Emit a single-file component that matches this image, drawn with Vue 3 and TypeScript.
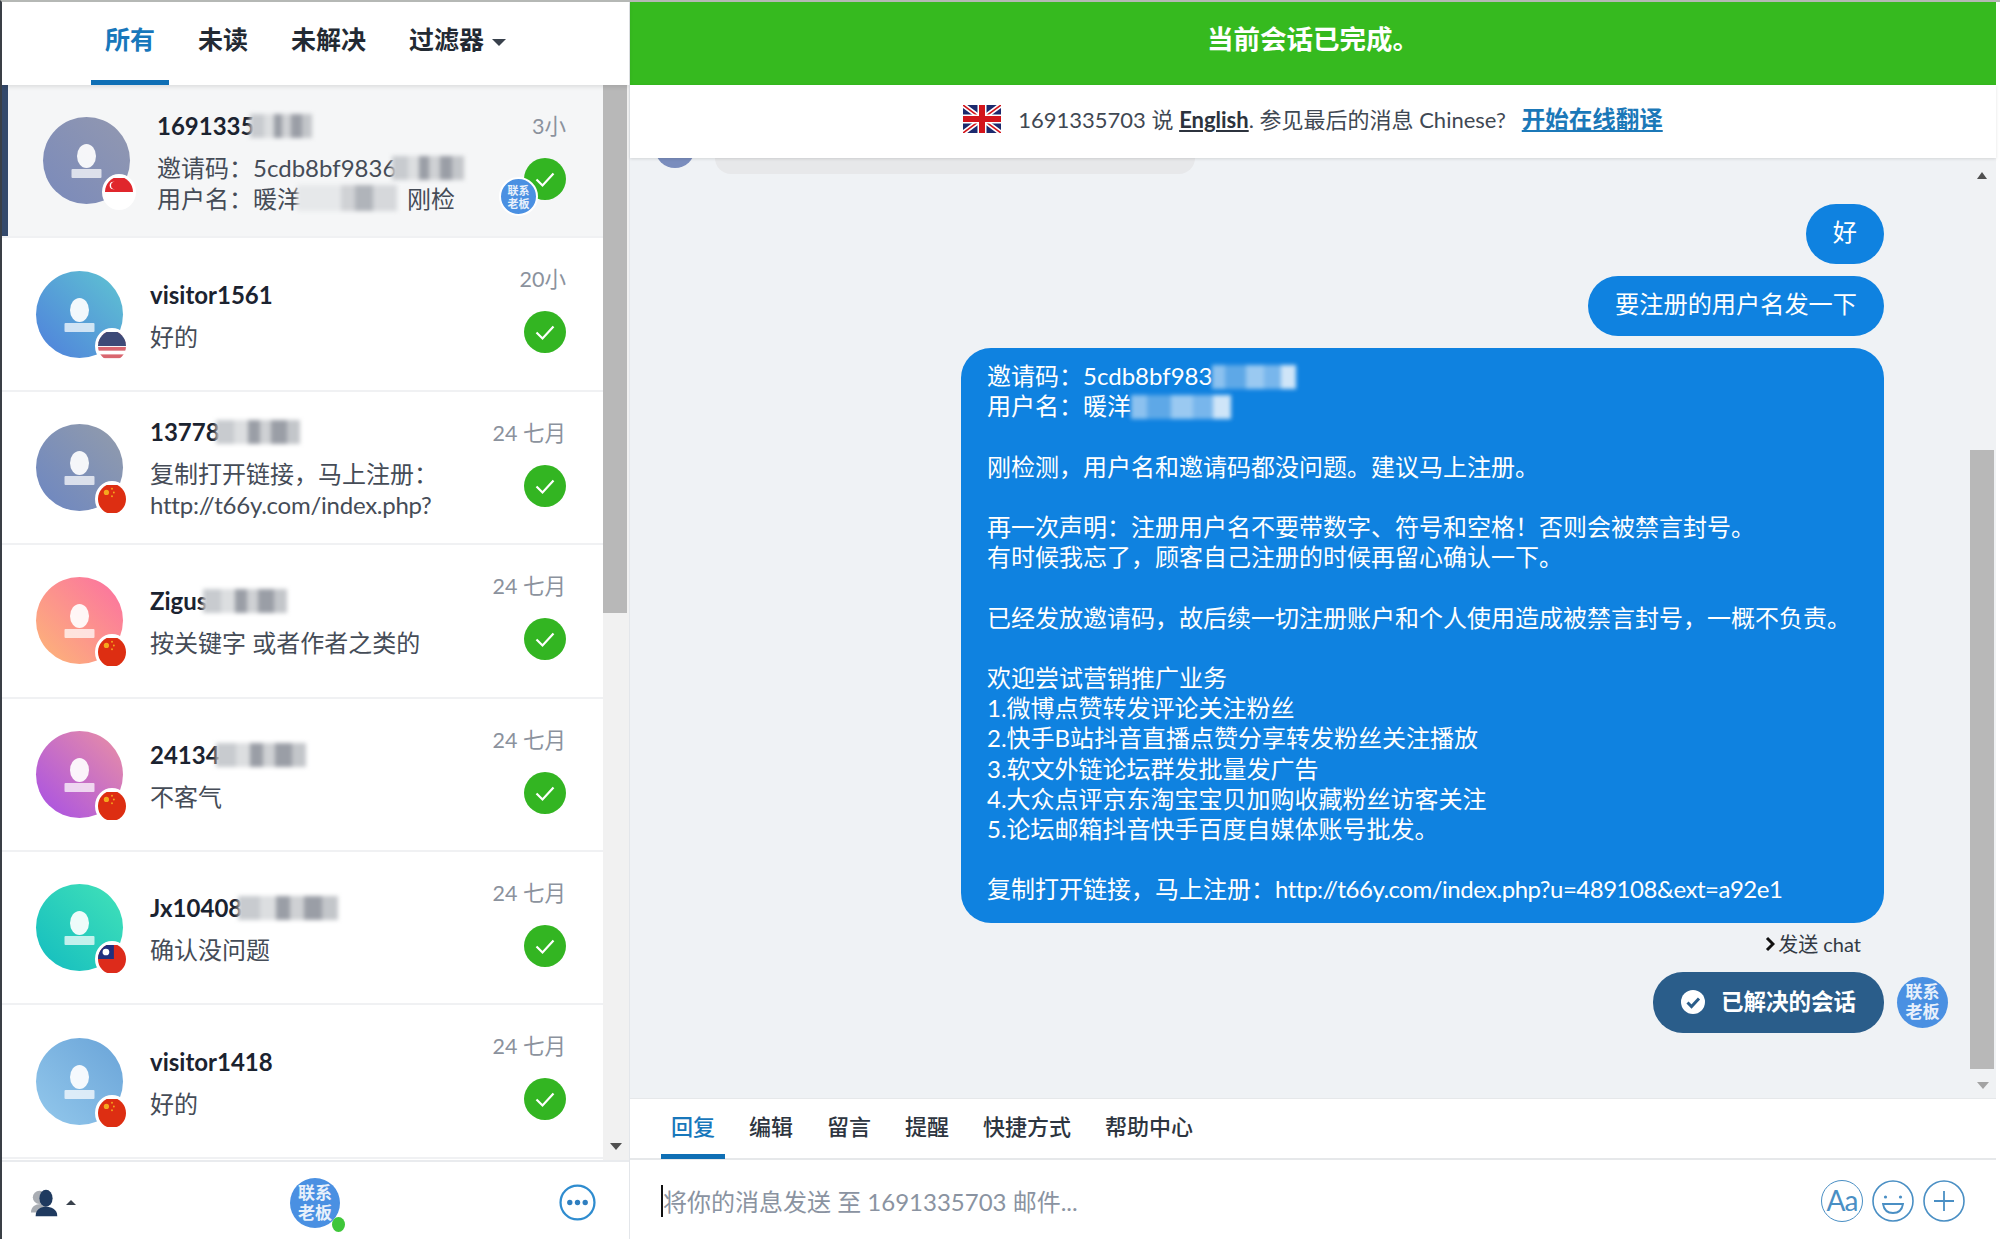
<script setup lang="ts">
interface Conv {
  name: string
  blur: number
  time: string
  lines: string[]
  grad: string
  flag: 'sg' | 'us' | 'cn' | 'tw'
}
const convs: Conv[] = [
  { name: '1691335', blur: 62, time: '3小', lines: [], grad: 'g1', flag: 'sg' },
  { name: 'visitor1561', blur: 0, time: '20小', lines: ['好的'], grad: 'g2', flag: 'us' },
  { name: '13778', blur: 84, time: '24 七月', lines: ['复制打开链接，马上注册：', 'http://t66y.com/index.php?'], grad: 'g3', flag: 'cn' },
  { name: 'Zigus', blur: 84, time: '24 七月', lines: ['按关键字 或者作者之类的'], grad: 'g4', flag: 'cn' },
  { name: '24134', blur: 90, time: '24 七月', lines: ['不客气'], grad: 'g5', flag: 'cn' },
  { name: 'Jx10408', blur: 100, time: '24 七月', lines: ['确认没问题'], grad: 'g6', flag: 'tw' },
  { name: 'visitor1418', blur: 0, time: '24 七月', lines: ['好的'], grad: 'g7', flag: 'cn' },
]
const tabs = ['未读', '未解决']
const replyTabs = ['编辑', '留言', '提醒', '快捷方式', '帮助中心']
const after = [
  '',
  '刚检测，用户名和邀请码都没问题。建议马上注册。',
  '',
  '再一次声明：注册用户名不要带数字、符号和空格！否则会被禁言封号。',
  '有时候我忘了，顾客自己注册的时候再留心确认一下。',
  '',
  '已经发放邀请码，故后续一切注册账户和个人使用造成被禁言封号，一概不负责。',
  '',
  '欢迎尝试营销推广业务',
  '1.微博点赞转发评论关注粉丝',
  '2.快手B站抖音直播点赞分享转发粉丝关注播放',
  '3.软文外链论坛群发批量发广告',
  '4.大众点评京东淘宝宝贝加购收藏粉丝访客关注',
  '5.论坛邮箱抖音快手百度自媒体账号批发。',
  '',
]
</script>

<template>
  <div class="app">
    <aside class="side">
      <nav class="side-tabs">
        <span class="stab active">所有</span>
        <span v-for="t in tabs" :key="t" class="stab">{{ t }}</span>
        <span class="stab">过滤器<i class="caret"></i></span>
      </nav>
      <div class="side-scroll">
        <ul class="list">
          <li v-for="(c, i) in convs" :key="c.name" class="row" :class="{ current: i === 0 }">
            <div class="avatar" :class="c.grad">
              <svg viewBox="0 0 87 87" class="person">
                <ellipse cx="43.5" cy="39" rx="9.5" ry="12" fill="#fff" fill-opacity=".92" />
                <rect x="28.5" y="52" width="30" height="9" rx="1" fill="#fff" fill-opacity=".72" />
              </svg>
              <span class="flag">
                <svg v-if="c.flag === 'sg'" viewBox="0 0 30 30">
                  <rect width="30" height="30" fill="#fff" />
                  <rect width="30" height="15" fill="#e0262c" />
                  <circle cx="9" cy="8" r="4" fill="#fff" />
                  <circle cx="10.5" cy="8" r="4" fill="#e0262c" />
                </svg>
                <svg v-else-if="c.flag === 'us'" viewBox="0 0 30 30">
                  <rect width="30" height="30" fill="#fff" />
                  <rect y="0" width="30" height="4" fill="#d9666f" />
                  <rect y="8" width="30" height="4" fill="#d9666f" />
                  <rect y="16" width="30" height="4" fill="#d9666f" />
                  <rect y="24" width="30" height="4" fill="#d9666f" />
                  <rect width="30" height="15" fill="#3e4a77" />
                </svg>
                <svg v-else-if="c.flag === 'tw'" viewBox="0 0 30 30">
                  <rect width="30" height="30" fill="#dd2b1b" />
                  <rect width="17" height="15" fill="#20307e" />
                  <circle cx="8.5" cy="7.5" r="3.6" fill="#fff" />
                </svg>
                <svg v-else viewBox="0 0 30 30">
                  <rect width="30" height="30" fill="#dd2e12" />
                  <circle cx="9" cy="8" r="2.8" fill="#f5a71e" />
                  <circle cx="15" cy="4" r="1" fill="#f5a71e" />
                  <circle cx="17" cy="8" r="1" fill="#f5a71e" />
                  <circle cx="15" cy="12" r="1" fill="#f5a71e" />
                </svg>
              </span>
            </div>
            <div class="body">
              <div class="name">{{ c.name }}<span v-if="c.blur" class="mosaic" :style="{ width: c.blur + 'px' }"></span></div>
              <template v-if="i === 0">
                <div class="msg">邀请码：5cdb8bf9836<span class="mosaic short"></span></div>
                <div class="msg">用户名：暖洋<span class="mosaic long"></span>刚检</div>
              </template>
              <template v-else>
                <div v-for="l in c.lines" :key="l" class="msg" :class="{ url: l.startsWith('http') }">{{ l }}</div>
              </template>
            </div>
            <div class="meta">
              <span class="time">{{ c.time }}</span>
              <svg class="done" viewBox="0 0 42 42">
                <circle cx="21" cy="21" r="21" fill="#33b522" />
                <path d="M12.5 21.5l6 6 11-12" fill="none" stroke="#fff" stroke-width="2.2" />
              </svg>
              <span v-if="i === 0" class="boss tiny">联系<br />老板</span>
            </div>
          </li>
        </ul>
        <div class="track">
          <div class="thumb"></div>
          <i class="arrow-down"></i>
        </div>
      </div>
      <footer class="side-foot">
        <div class="me">
          <svg viewBox="0 0 34 30" class="me-icon">
            <circle cx="10" cy="9" r="7" fill="#a9adb3" />
            <path d="M1 25c0-6 5-9 10-9s8 3 8 9z" fill="#a9adb3" />
            <ellipse cx="17" cy="10" rx="7" ry="9" fill="#1f3a5f" />
            <path d="M6 29c0-8 6-10 11-10s12 2 12 10z" fill="#1f3a5f" />
          </svg>
          <i class="caret up"></i>
        </div>
        <div class="boss-wrap">
          <span class="boss large">联系<br />老板</span>
          <i class="online"></i>
        </div>
        <svg class="dots" viewBox="0 0 36 36">
          <circle cx="18" cy="18" r="16.5" fill="none" stroke="#2f8ccf" stroke-width="2.2" />
          <circle cx="10.5" cy="18" r="2.6" fill="#2f7fc0" />
          <circle cx="18" cy="18" r="2.6" fill="#2f7fc0" />
          <circle cx="25.5" cy="18" r="2.6" fill="#2f7fc0" />
        </svg>
      </footer>
    </aside>

    <main class="main">
      <div class="banner">当前会话已完成。</div>
      <div class="translate">
        <svg class="uk" viewBox="0 0 38 28">
          <rect width="38" height="28" fill="#1c2a6e" />
          <path d="M0 0l38 28M38 0L0 28" stroke="#fff" stroke-width="5" />
          <path d="M0 0l38 28M38 0L0 28" stroke="#d3141b" stroke-width="1.6" />
          <path d="M19 0v28M0 14h38" stroke="#fff" stroke-width="9" />
          <path d="M19 0v28M0 14h38" stroke="#d3141b" stroke-width="6" />
        </svg>
        <span class="tr-text">1691335703 说 <u class="lang">English</u>. 参见最后的消息 Chinese?</span>
        <a class="tr-link">开始在线翻译</a>
      </div>
      <div class="chat">
        <div class="messages">
          <div class="stub">
            <span class="stub-avatar"></span>
            <span class="stub-bubble"></span>
          </div>
          <div class="bubble small">好</div>
          <div class="bubble small">要注册的用户名发一下</div>
          <div class="bubble big">
            <div>邀请码：5cdb8bf983<span class="mosaic on-blue wide"></span></div>
            <div>用户名：暖洋<span class="mosaic on-blue mid"></span></div>
            <div v-for="(l, i) in after" :key="i" class="line">{{ l }}</div>
            <div class="line">复制打开链接，马上注册：<span class="bubble-url">http://t66y.com/index.php?u=489108&amp;ext=a92e1</span></div>
          </div>
          <div class="sent">
            <svg class="chev" viewBox="0 0 10 16">
              <path d="M2 2l6 6-6 6" fill="none" stroke="#111" stroke-width="3" />
            </svg>
            发送 chat
          </div>
          <div class="resolved-row">
            <div class="resolved">
              <svg viewBox="0 0 24 24" class="res-check">
                <circle cx="12" cy="12" r="12" fill="#fff" />
                <path d="M6.5 12.5l4 4 7.5-8" fill="none" stroke="#2a5d8a" stroke-width="3" />
              </svg>
              <span class="res-text">已解决的会话</span>
            </div>
            <span class="boss medium">联系<br />老板</span>
          </div>
        </div>
        <div class="track chat-track">
          <i class="arrow-up"></i>
          <div class="chat-thumb"></div>
          <i class="arrow-down light"></i>
        </div>
      </div>
      <div class="reply-tabs">
        <span class="rtab active">回复</span>
        <span v-for="t in replyTabs" :key="t" class="rtab">{{ t }}</span>
      </div>
      <div class="input">
        <i class="cursor"></i>
        <span class="placeholder">将你的消息发送 至 1691335703 邮件...</span>
        <div class="tools">
          <span class="tool aa">Aa</span>
          <svg class="tool-svg" viewBox="0 0 42 42">
            <circle cx="21" cy="21" r="20" fill="none" stroke="#4a8fc4" stroke-width="1.6" />
            <circle cx="13.5" cy="17" r="1.6" fill="#4a8fc4" />
            <circle cx="28.5" cy="17" r="1.6" fill="#4a8fc4" />
            <path d="M11 24h20c-1 6-5 9-10 9s-9-3-10-9z" fill="none" stroke="#4a8fc4" stroke-width="1.8" />
          </svg>
          <svg class="tool-svg" viewBox="0 0 42 42">
            <circle cx="21" cy="21" r="20" fill="none" stroke="#4a8fc4" stroke-width="1.6" />
            <path d="M21 11v20M11 21h20" stroke="#4a8fc4" stroke-width="1.8" />
          </svg>
        </div>
      </div>
    </main>
  </div>
</template>

<style>
html, body { margin: 0; background: #fff; }
</style>

<style scoped>
.app {
  width: 2000px;
  height: 1239px;
  display: flex;
  box-sizing: border-box;
  border-left: 2px solid #3a3f46;
  border-top: 2px solid #b5b8b5;
  padding-right: 4px;
  font-family: Lato, "Noto Sans CJK SC", sans-serif;
  color: #1d2530;
  overflow: hidden;
  background: #fff;
}
.side {
  width: 628px;
  flex: none;
  display: flex;
  flex-direction: column;
  border-right: 1px solid #e3e6ea;
  box-sizing: border-box;
}
.side-tabs {
  height: 83px;
  flex: none;
  display: flex;
  align-items: stretch;
  padding-left: 89px;
  gap: 15px;
  box-shadow: 0 2px 4px rgba(0, 0, 0, .1);
  position: relative;
  z-index: 2;
}
.stab {
  padding: 0 14px;
  font-size: 25px;
  font-weight: 700;
  line-height: 75px;
  color: #232a33;
  border-bottom: 5px solid transparent;
}
.stab.active { color: #1877bb; border-bottom-color: #0f6fb5; }
.caret {
  display: inline-block;
  margin-left: 8px;
  vertical-align: middle;
  border-left: 7px solid transparent;
  border-right: 7px solid transparent;
  border-top: 7px solid #39414c;
}
.caret.up {
  margin-left: 4px;
  border-left-width: 5px;
  border-right-width: 5px;
  border-top: 0;
  border-bottom: 5px solid #39414c;
}
.side-scroll { flex: 1; display: flex; min-height: 0; overflow: hidden; }
.list { list-style: none; margin: 0; padding: 0; width: 601px; flex: none; }
.row {
  height: 153.4px;
  box-sizing: border-box;
  display: flex;
  align-items: center;
  position: relative;
  padding: 0 37px 0 34px;
  border-bottom: 2px solid #f0f1f3;
}
.row.current {
  background: #f5f6f7;
  padding-left: 41px;
  box-shadow: inset 6px 0 0 #34496b;
}
.avatar {
  width: 87px;
  height: 87px;
  border-radius: 50%;
  position: relative;
  flex: none;
}
.person { display: block; width: 87px; height: 87px; }
.g1 { background: linear-gradient(45deg, #7a8abb, #9298b0); }
.g2 { background: linear-gradient(45deg, #4f7fdc, #5fc4d2); }
.g3 { background: linear-gradient(45deg, #6c86c2, #939cab); }
.g4 { background: linear-gradient(45deg, #fdb777, #fb6fa2); }
.g5 { background: linear-gradient(45deg, #a64fe6, #ea90a4); }
.g6 { background: linear-gradient(45deg, #13bcc0, #42e2b8); }
.g7 { background: linear-gradient(45deg, #93c8ec, #6aa4d8); }
.flag {
  position: absolute;
  right: -6px;
  bottom: -6px;
  width: 28px;
  height: 30px;
  border-radius: 50%;
  overflow: hidden;
  border: 3px solid #fff;
  background: #fff;
}
.flag svg { display: block; width: 100%; height: 100%; }
.body {
  flex: 1;
  min-width: 0;
  padding-left: 27px;
  margin-top: 2px;
}
.name {
  font-size: 24px;
  font-weight: 700;
  line-height: 32px;
  margin-bottom: 10px;
  color: #1b2330;
  white-space: nowrap;
}
.msg {
  font-size: 24px;
  line-height: 31px;
  color: #454c57;
  white-space: nowrap;
}
.msg.url { letter-spacing: -.25px; }
.mosaic {
  display: inline-block;
  height: 24px;
  vertical-align: -3px;
  margin-left: -4px;
  background:
    linear-gradient(90deg, #c8cbcf 0 22%, #dcdee0 22% 38%, #9a9ea6 38% 52%, #cfd1d4 52% 66%, #9a9ea6 66% 84%, #c3c6ca 84%);
  filter: blur(2px);
}
.mosaic.short { width: 72px; height: 24px; }
.mosaic.long { width: 100px; height: 26px; margin-right: 10px; background: linear-gradient(90deg, #e6e8ea 0 44%, #d0d2d5 44% 58%, #b0b4ba 58% 76%, #d6d8db 76%); }
.mosaic.on-blue {
  background: linear-gradient(90deg, #8cc1ef 0 16%, #5ea8e7 16% 40%, #9ac9f1 40% 62%, #78b6ec 62% 82%, #cfe5f8 82%);
  vertical-align: -4px;
}
.mosaic.wide { width: 84px; margin-left: 0; }
.mosaic.mid { width: 100px; margin-left: 0; }
.meta {
  position: absolute;
  right: 37px;
  top: 26px;
  display: flex;
  flex-direction: column;
  align-items: flex-end;
  gap: 17px;
}
.time { font-size: 21.5px; line-height: 30px; color: #8b929d; white-space: nowrap; }
.done { width: 42px; height: 42px; display: block; }
.boss {
  display: flex;
  align-items: center;
  justify-content: center;
  text-align: center;
  border-radius: 50%;
  background: #4a90e2;
  color: #e8f0fb;
  font-weight: 700;
  flex: none;
}
.boss.tiny {
  position: absolute;
  width: 35px;
  height: 35px;
  right: 28px;
  bottom: -16px;
  border: 2px solid #fff;
  font-size: 11px;
  line-height: 13px;
}
.boss.large { width: 50px; height: 50px; font-size: 17px; line-height: 20px; }
.boss.medium { width: 51px; height: 51px; font-size: 17px; line-height: 20px; }
.track {
  flex: none;
  width: 26px;
  background: #f1f1f1;
  position: relative;
}
.thumb { width: 24px; height: 528px; background: #b8b8b8; }
.arrow-down {
  position: absolute;
  left: 7px;
  bottom: 10px;
  border-left: 6px solid transparent;
  border-right: 6px solid transparent;
  border-top: 7px solid #505050;
}
.arrow-down.light { border-top-color: #a3a3a3; bottom: 9px; }
.arrow-up {
  position: absolute;
  left: 7px;
  top: 14px;
  border-left: 5px solid transparent;
  border-right: 5px solid transparent;
  border-bottom: 7px solid #505050;
}
.side-foot {
  height: 79px;
  flex: none;
  display: flex;
  align-items: center;
  padding: 4px 33px 0 28px;
  border-top: 2px solid #e9ebee;
  box-sizing: border-box;
}
.me { display: flex; align-items: center; width: 50px; }
.me-icon { width: 32px; height: 30px; }
.boss-wrap { position: relative; margin-left: 210px; }
.online {
  position: absolute;
  right: -5px;
  bottom: -4px;
  width: 13px;
  height: 15px;
  border-radius: 50%;
  background: #3fc63a;
}
.dots { width: 37px; height: 37px; margin-left: auto; }
.main { flex: 1; min-width: 0; display: flex; flex-direction: column; }
.banner {
  height: 83px;
  flex: none;
  box-sizing: border-box;
  padding-bottom: 12px;
  background: #36ba1f;
  color: #fff;
  font-size: 26.5px;
  font-weight: 700;
  display: flex;
  align-items: center;
  justify-content: center;
}
.translate {
  height: 73px;
  flex: none;
  box-sizing: border-box;
  padding-bottom: 7px;
  display: flex;
  align-items: center;
  justify-content: center;
  font-size: 22px;
  color: #3f4853;
  box-shadow: 0 1px 3px rgba(0, 0, 0, .12);
  position: relative;
  z-index: 2;
  background: #fff;
}
.uk { width: 38px; height: 28px; margin: 2px 17px 0 0; }
.tr-text { white-space: nowrap; }
.lang { font-weight: 700; color: #2c333d; }
.tr-link { margin-left: 16px; color: #1b78b8; text-decoration: underline; font-size: 23.5px; font-weight: 700; }
.chat {
  flex: 1;
  min-height: 0;
  display: flex;
  background: #eff2f5;
}
.messages {
  flex: 1;
  min-width: 0;
  display: flex;
  flex-direction: column;
  align-items: flex-end;
  padding-right: 86px;
  overflow: hidden;
}
.stub {
  flex: none;
  align-self: flex-start;
  display: flex;
  height: 16px;
  gap: 20px;
  margin-left: 25px;
  margin-bottom: 30px;
}
.stub-avatar {
  width: 40px;
  height: 40px;
  margin-top: -30px;
  border-radius: 50%;
  background: #7a8dbd;
}
.stub-bubble {
  width: 480px;
  height: 16px;
  border-radius: 0 0 24px 24px;
  background: #e7e8ea;
}
.bubble {
  flex: none;
  background: #0f82e0;
  color: #fff;
  font-size: 24px;
  line-height: 30.2px;
  white-space: nowrap;
  box-sizing: border-box;
}
.bubble.small {
  height: 60px;
  padding: 0 27px;
  border-radius: 30px;
  font-size: 24.2px;
  line-height: 56px;
  margin-bottom: 12px;
}
.bubble.big {
  width: 923px;
  padding: 13px 26px 18px;
  border-radius: 30px;
}
.line { min-height: 30.2px; }
.bubble-url { letter-spacing: -.5px; }
.sent {
  flex: none;
  margin-top: 6px;
  margin-right: 23px;
  font-size: 20px;
  line-height: 30px;
  color: #333a44;
  display: flex;
  align-items: center;
  gap: 3px;
}
.chev { width: 10px; height: 16px; }
.resolved-row {
  flex: none;
  margin-right: -64px;
  margin-top: 13px;
  display: flex;
  align-items: center;
  gap: 13px;
}
.resolved {
  width: 231px;
  height: 61px;
  border-radius: 30px;
  background: #2a5d8a;
  color: #fff;
  font-size: 22.5px;
  font-weight: 700;
  display: flex;
  align-items: center;
  box-sizing: border-box;
  padding-left: 28px;
  gap: 16px;
}
.res-text { margin-top: -5px; }
.res-check { width: 24px; height: 24px; flex: none; }
.chat-track { width: 26px; background: #f0f2f4; }
.chat-thumb { margin-top: 292px; height: 619px; width: 24px; background: #b8b8b8; }
.reply-tabs {
  height: 62px;
  flex: none;
  box-sizing: border-box;
  display: flex;
  padding-left: 31px;
  gap: 14px;
  border-bottom: 2px solid #e6e8ea;
  border-top: 1px solid #e6e8ea;
}
.rtab {
  padding: 0 10px;
  font-size: 22px;
  font-weight: 500;
  line-height: 56px;
  color: #2d3540;
  height: 60px;
  box-sizing: border-box;
  border-bottom: 5px solid transparent;
}
.rtab.active { color: #1877bb; border-bottom-color: #0f6fb5; }
.input {
  flex: none;
  height: 79px;
  box-sizing: border-box;
  display: flex;
  align-items: center;
  padding: 2px 31px 0 31px;
  position: relative;
}
.cursor { width: 2px; height: 32px; background: #111; flex: none; }
.placeholder { font-size: 24px; color: #8a93a1; white-space: nowrap; }
.tools { margin-left: auto; display: flex; align-items: center; gap: 9px; }
.tool {
  width: 42px;
  height: 42px;
  border-radius: 50%;
  border: 1.6px solid #4a8fc4;
  box-sizing: border-box;
  color: #4a8fc4;
  font-size: 28px;
  letter-spacing: -1px;
  text-align: center;
  line-height: 38px;
}
.tool-svg { width: 42px; height: 42px; }
</style>
